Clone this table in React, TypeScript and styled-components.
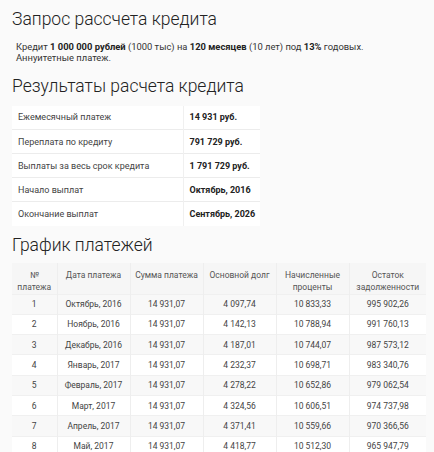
import React from "react";
import styled, { createGlobalStyle } from "styled-components";

const Global = createGlobalStyle`
  html, body { margin: 0; padding: 0; background: #fafafa; }
  body { font-family: Roboto, "Noto Sans", sans-serif; color: #333; width: 434px; height: 452px; overflow: hidden; }
`;

const Page = styled.div`
  padding: 8px 8px 0 12px;
  display: flex;
  flex-direction: column;
`;

const H = styled.h2<{ $mt?: number }>`
  margin: ${(p) => p.$mt ?? 0}px 0 0 0;
  font-weight: 300;
  font-size: 17.5px;
  line-height: 22px;
  color: #222;
`;

const Lead = styled.p`
  margin: 11px 0 0 4px;
  font-size: 9.4px;
  line-height: 11px;
  color: #333;
  b { font-weight: 700; color: #222; }
`;

const Col = styled.col<{ $w?: number }>`
  width: ${(p) => (p.$w ? `${p.$w}px` : "auto")};
`;

const ResTable = styled.table`
  margin-top: 8.5px;
  width: 248px;
  border-collapse: collapse;
  background: #fff;
  font-size: 9px;
  td {
    height: 24px;
    padding: 0 0 0 6px;
    border-top: 1px solid #ececec;
    color: #444;
    box-sizing: border-box;
  }
  tr:first-child td { border-top: none; }
  td + td { border-left: 1px solid #f0f0f0; font-weight: 700; color: #222; }
`;

const Sched = styled.table`
  margin-top: 7.5px;
  width: 414px;
  border-collapse: collapse;
  background: #fff;
  font-size: 8.5px;
  text-align: center;
  color: #444;
  th {
    font-weight: 400;
    background: #f6f6f6;
    height: 31px;
    box-sizing: border-box;
    vertical-align: top;
    padding: 6px 2px 0;
    line-height: 12px;
    color: #555;
  }
  td { height: 20.3px; padding: 0; border-top: 1px solid #f0f0f0; box-sizing: border-box; }
  th + th, td + td { border-left: 1px solid #eeeeee; }
  tbody tr:nth-child(odd) td { background: #f8f8f8; }
`;

const results: [string, string][] = [
  ["Ежемесячный платеж", "14 931 руб."],
  ["Переплата по кредиту", "791 729 руб."],
  ["Выплаты за весь срок кредита", "1 791 729 руб."],
  ["Начало выплат", "Октябрь, 2016"],
  ["Окончание выплат", "Сентябрь, 2026"],
];

const rows = [
  ["1", "Октябрь, 2016", "14 931,07", "4 097,74", "10 833,33", "995 902,26"],
  ["2", "Ноябрь, 2016", "14 931,07", "4 142,13", "10 788,94", "991 760,13"],
  ["3", "Декабрь, 2016", "14 931,07", "4 187,01", "10 744,07", "987 573,12"],
  ["4", "Январь, 2017", "14 931,07", "4 232,37", "10 698,71", "983 340,76"],
  ["5", "Февраль, 2017", "14 931,07", "4 278,22", "10 652,86", "979 062,54"],
  ["6", "Март, 2017", "14 931,07", "4 324,56", "10 606,51", "974 737,98"],
  ["7", "Апрель, 2017", "14 931,07", "4 371,41", "10 559,66", "970 366,56"],
  ["8", "Май, 2017", "14 931,07", "4 418,77", "10 512,30", "965 947,79"],
];

export default function App() {
  return (
    <>
      <Global />
      <Page>
        <H>Запрос рассчета кредита</H>
        <Lead>
          Кредит <b>1 000 000 рублей</b> (1000 тыс) на <b>120 месяцев</b> (10 лет) под <b>13%</b> годовых.
          <br />
          Аннуитетные платеж.
        </Lead>
        <H $mt={12}>Результаты расчета кредита</H>
        <ResTable>
          <colgroup>
            <Col $w={171} />
            <Col />
          </colgroup>
          <tbody>
            {results.map(([a, b]) => (
              <tr key={a}>
                <td>{a}</td>
                <td>{b}</td>
              </tr>
            ))}
          </tbody>
        </ResTable>
        <H $mt={8}>График платежей</H>
        <Sched>
          <colgroup>
            <Col $w={45} />
            <Col $w={73} />
            <Col $w={73} />
            <Col $w={73} />
            <Col $w={73} />
            <Col />
          </colgroup>
          <thead>
            <tr>
              <th>№<br />платежа</th>
              <th>Дата платежа</th>
              <th>Сумма платежа</th>
              <th>Основной долг</th>
              <th>Начисленные<br />проценты</th>
              <th>Остаток<br />задолженности</th>
            </tr>
          </thead>
          <tbody>
            {rows.map((r) => (
              <tr key={r[0]}>
                {r.map((c, i) => (
                  <td key={i}>{c}</td>
                ))}
              </tr>
            ))}
          </tbody>
        </Sched>
      </Page>
    </>
  );
}
